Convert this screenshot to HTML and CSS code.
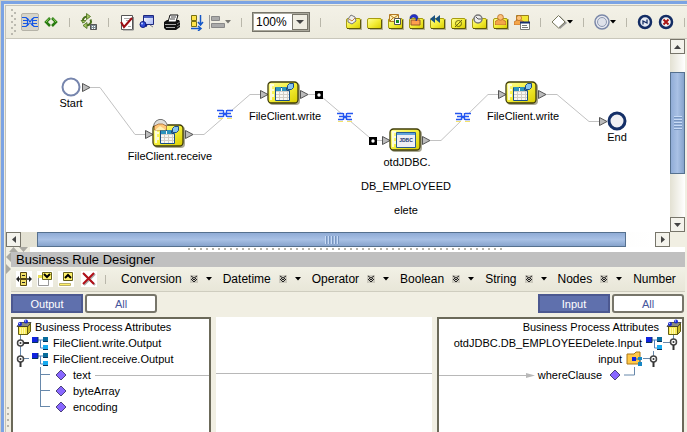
FILE: index.html
```
<!DOCTYPE html>
<html lang="en">
<head>
<meta charset="utf-8">
<title>Business Rule Designer</title>
<link rel="stylesheet" href="styles.css">
</head>
<body>
<svg class="defs" aria-hidden="true">
  <defs>
    <linearGradient id="gold" x1="0" y1="0" x2="1" y2="1"><stop offset="0" stop-color="#ffff9c"/><stop offset=".5" stop-color="#f4ee38"/><stop offset="1" stop-color="#d8cc00"/></linearGradient>
    <linearGradient id="panel" x1="0" y1="0" x2="1" y2="1"><stop offset="0" stop-color="#fff"/><stop offset="1" stop-color="#a4b4f4"/></linearGradient>
    <symbol id="link" viewBox="0 0 16 10"><path d="M0 .5h4l2 2M16 .5h-4l-2 2M1 3.500h4M1 6.500h4M0 9.500h4l2-2M16 9.500h-4l-2-2M11 3.500h4M11 6.500h4M5.500 1v8M10.500 1v8M6 2l4 6M10 2L6 8" fill="none" stroke="#1457e8" stroke-width="1.200"/></symbol>
    <symbol id="rule" viewBox="0 0 16 10"><path d="M1 1h14v8H1z" fill="#fff" opacity=".8"/><path d="M1 9.500h5M10 9.500h5" stroke="#f5e36a"/><path d="M0 1.500h6M10 1.500h6M2 4.500h4M10 4.500h4M1 7.500h5M10 7.500h5M6.500 1v7M9.500 1v7M6 3l4 4M10 3L6 7" fill="none" stroke="#2456f0" stroke-width="1.300"/></symbol>
    <symbol id="box" viewBox="0 0 16 16"><path d="M2 5h14v11H3z" fill="#9b9878" opacity=".7"/><rect x=".5" y="4.500" width="14" height="10" rx="1.500" fill="url(#gold)" stroke="#a79c10"/><path d="M1 14.500h13.500V6" fill="none" stroke="#5f5908"/></symbol>
    <symbol id="man" viewBox="0 0 10 10"><path d="M0 10V7l3-2h4l3 2v3z" fill="#f4a54a" stroke="#b5661c" stroke-width=".7"/><circle cx="5" cy="3" r="2.600" fill="#fcc27a" stroke="#b5661c" stroke-width=".7"/></symbol>
    <symbol id="activity" viewBox="0 0 33 24"><rect x="2" y="2" width="31" height="22" rx="4" fill="#aaa894"/><rect x="1" y="1" width="30" height="21" rx="3.500" fill="url(#gold)" stroke="#3f3c08" stroke-width="1.300"/><path d="M3 3h4v2H5v3h2v2H5v3h2v3H5v3H3z" fill="#fff" opacity=".75"/></symbol>
    <symbol id="client" viewBox="0 0 33 24"><use href="#activity"/><path d="M8.500 6.500h11v3h3v10h-14z" fill="#f8f8f4" stroke="#174d86"/><path d="M9 6h5v4H9zM15 6h4v4h-4z" fill="#2c93bd"/><path d="M9 10.500h13M9 13.500h13M9 16.500h13M12.500 11v8M16.500 11v8M20.500 11v8" stroke="#d2cec5"/><path d="M20.500 4.500l2-2h4v4l-2 2h-4z" fill="#85c4ee" stroke="#1d4a86"/></symbol>
    <symbol id="port" viewBox="0 0 9 9"><path d="M.5.500v8L8 4.500z" fill="#bcbcbc" stroke="#555"/></symbol>
    <symbol id="stop" viewBox="0 0 8 8"><path d="M0 0h8v8H0z"/><circle cx="4" cy="4" r="1.700" fill="#fff"/></symbol>
    <symbol id="down" viewBox="0 0 6 4"><path d="M0 0h6L3 3.500z"/></symbol>
    <symbol id="more" viewBox="0 0 8 8"><path d="M0 0h8v8H0z" fill="#bbb9ae" opacity=".65"/><path d="M1 1l3 2 3-2M1 4l3 3 3-3M2 3l2 2 2-2" fill="none" stroke="#222"/></symbol>
    <symbol id="up-tri" viewBox="0 0 7 4"><path d="M0 4h7L3.500 0z" fill="#444"/></symbol>
    <symbol id="schema" viewBox="0 0 17 15"><path d="M6 4h5M8.500 4v8H11" fill="none" stroke="#5282ba"/><path d="M0 1h6v6H0z" fill="#1023df"/><path d="M11 1h5v5h-5z" fill="#086c9c"/><path d="M11 9h5v5h-5z" fill="#18abf0"/><path d="M0 6.500h6V1M11 5.500h5M11 13.500h5" fill="none" stroke="#06335d"/></symbol>
    <symbol id="attrs" viewBox="0 0 16 16"><path d="M2.500 7.500h9v8h-9z" fill="#f8ea58" stroke="#655e10"/><path d="M11.500 7.500l3-3v8l-3 3z" fill="#c9bb28" stroke="#655e10"/><path d="M1 7.500l3-4h11l-3 4z" fill="#8a8a7e" stroke="#33332b" stroke-width=".8"/><path d="M4.500 9v6M6.500 9v6M8.500 9v6" stroke="#fff9a9"/><circle cx="4" cy="5" r="2" fill="#1728d8"/><circle cx="10" cy="2.500" r="2" fill="#1728d8"/><circle cx="3.500" cy="4.500" r=".7" fill="#b9cbff"/><circle cx="9.500" cy="2" r=".7" fill="#b9cbff"/></symbol>
    <symbol id="leaf" viewBox="0 0 12 12"><path d="M6 1l5 5-5 5-5-5z" fill="#8867ff" stroke="#4c4379"/></symbol>
    <symbol id="frame" viewBox="0 0 16 16"><path d="M0 0h16v16H0z" fill="#fff"/></symbol>
  </defs>
</svg>

<div class="frame">
  <header class="toolbar" role="toolbar" aria-label="Process tools">
    <svg class="grip" width="5" height="26"><path d="M1 0v26M4 3v23" stroke="#aaa9a0" stroke-width="1.500" stroke-dasharray="2 4"/></svg>
    <div class="group">
      <button class="tool tool-on" aria-label="Mapping mode"><svg width="16" height="10"><use href="#link"/></svg></button>
      <button class="tool" aria-label="Show code"><svg width="16" height="16" viewBox="0 0 16 16"><path d="M7 4L3 8l4 4M9 4l4 4-4 4" fill="none" stroke="#287b10" stroke-width="2.500"/><path d="M6 4.500L3 8M10 4.500L13 8" stroke="#91d45e"/></svg></button>
    </div>
    <span class="sep"></span>
    <div class="group">
      <button class="tool" aria-label="Synchronize"><svg width="18" height="18" viewBox="0 0 18 18"><path d="M7 3.500C3 4 2 7 3.500 10M6 12.500c4 0 6-3 4.500-6" fill="none" stroke="#466d1a" stroke-width="2"/><path d="M6.500.500l4 3-4 3zM7 9.500l-4 3 4 3zM1 7.500h5L3.500 10z" fill="#a7c765" stroke="#466d1a" stroke-width=".8"/><path d="M10.500 11.500h6v5h-6z" fill="#7f8e95" stroke="#555"/><path d="M12 13.500h4M12 15.500h4" stroke="#fff" stroke-dasharray="1 1"/></svg></button>
    </div>
    <span class="sep"></span>
    <div class="group group-wide">
      <button class="tool" aria-label="Validate"><svg width="16" height="17" viewBox="0 0 16 17"><path d="M2.500 1.500h11v14h-11z" fill="#fff" stroke="#555"/><path d="M14.500 3v13H4" fill="none" stroke="#8a8a8a"/><path d="M5 4.500h7M7 6.500h5M9 12.500h3" stroke="#aaa"/><path d="M2 8l3 5 8-9" fill="none" stroke="#9c0c12" stroke-width="2"/></svg></button>
      <button class="tool" aria-label="Data view"><svg width="16" height="16" viewBox="0 0 16 16"><path d="M4.500 1.500h10v9h-10z" fill="url(#panel)" stroke="#1d277e"/><path d="M5 3h9" stroke="#465cc0" stroke-width="2"/><path d="M11 11l3 2" stroke="#7d7d88"/><circle cx="4" cy="10.500" r="3" fill="#304bd8" stroke="#101b84"/><path d="M6 11l2 1" stroke="#101b84" stroke-width="2"/><circle cx="3" cy="9.500" r="1" fill="#b9cbff"/></svg></button>
      <button class="tool tool-print" aria-label="Print"><svg width="18" height="17" viewBox="0 0 18 17"><path d="M1 8l3-2h12l1 2v5l-4 3H3l-2-2z" fill="#111"/><path d="M5 8l2-7h8l-2 7z" fill="#fff" stroke="#111"/><path d="M8 3h5M7 5h5" stroke="#444"/><path d="M2 10.500h11M3 13.500h9" stroke="#aaa"/><path d="M14 10l3-2M14 13l3-2" stroke="#777"/></svg></button>
      <button class="tool" aria-label="Auto layout"><svg width="16" height="17" viewBox="0 0 16 17"><path d="M2.500 1.500h5v5h-5zM2.500 7.500h5v5h-5z" fill="#ffe44a" stroke="#777012"/><path d="M11.500 1v9M9 8l2.500 3L14 8M2 14.500h9M9 12l3 2.500L9 17" fill="none" stroke="#1457c8" stroke-width="1.500"/></svg></button>
      <button class="tool tool-menu" aria-label="Align"><svg width="16" height="16" viewBox="0 0 16 16"><path d="M.5 1v14" stroke="#999"/><path d="M2.500 2.500h8v4h-8zM2.500 9.500h13v4h-13z" fill="#aaa" stroke="#888"/></svg><svg width="6" height="4" class="dim"><use href="#down"/></svg></button>
    </div>
    <span class="sep"></span>
    <label class="combo"><select aria-label="Zoom"><option>100%</option></select><span class="combo-arrow"><svg width="8" height="4" viewBox="0 0 8 4"><path d="M0 0h8L4 4z" fill="#444"/></svg></span></label>
    <span class="sep"></span>
    <div class="group group-shapes group-activities">
      <button class="tool" aria-label="Receive"><svg width="16" height="16"><use href="#box"/><path d="M2 5l3-4 4 2 1 4-4 3-4-2z" fill="#eee" stroke="#777"/><path d="M3 5l3 2 3-3" fill="none" stroke="#c8803a"/></svg></button>
      <button class="tool" aria-label="Invoke"><svg width="16" height="16"><use href="#box"/></svg></button>
      <button class="tool" aria-label="Reply"><svg width="16" height="16"><use href="#box"/><path d="M1.500.500h9v7h-9z" fill="#fff0b2" stroke="#b37822"/><path d="M2 1l4 3 4-3M2 7l3-3" fill="none" stroke="#b37822"/><path d="M6.500 4.500h6v6h-6z" fill="#fff" stroke="#555"/><path d="M8 6h3v3H8z" fill="#168921"/></svg></button>
      <button class="tool" aria-label="Send message"><svg width="16" height="16"><use href="#box"/><path d="M2 6h9v5H2z" fill="#ff9f4e" stroke="#98582b"/><path d="M1 5a4 4 0 0 1 8-1l-2 3V4L4 3z" fill="#2330c8" stroke="#111d78" stroke-width=".5"/></svg></button>
      <button class="tool" aria-label="Compensate"><svg width="16" height="16"><use href="#box"/><path d="M5 1v8L0 5zM10 1v8L5 5z" fill="#195180"/></svg></button>
      <button class="tool" aria-label="Empty"><svg width="16" height="16"><use href="#box"/><circle cx="7.500" cy="9.500" r="3" fill="none" stroke="#6e680d"/><path d="M4 13l7-7" stroke="#6e680d"/></svg></button>
      <button class="tool" aria-label="Wait"><svg width="16" height="16"><use href="#box"/><circle cx="6" cy="5" r="4" fill="#eee" stroke="#777" stroke-width="1.500"/><path d="M4 3l2 2h3" fill="none" stroke="#555"/></svg></button>
      <button class="tool" aria-label="User activity"><svg width="16" height="16"><use href="#box"/><use href="#man" x="2" y="0" width="11" height="11"/></svg></button>
      <button class="tool" aria-label="Worklist"><svg width="16" height="16"><path d="M2.500 1.500h12v9h-12z" fill="#f2e633" stroke="#987f1e"/><use href="#man" x="0" y="1" width="10" height="10"/><path d="M6.500 8.500h9v7h-9z" fill="#fff" stroke="#777"/><path d="M6 8.500h10" stroke="#172f70" stroke-width="2"/><path d="M8 11.500h5M8 13.500h6" stroke="#777"/></svg></button>
    </div>
    <span class="sep"></span>
    <button class="tool tool-menu" aria-label="Gateway"><svg width="16" height="16"><path d="M9 2l7 7-7 6-6-6z" fill="#999"/><path d="M7.500 1.500L14 8l-6.500 6L1 8z" fill="#fff" stroke="#77775c"/></svg><svg width="6" height="4"><use href="#down"/></svg></button>
    <span class="sep"></span>
    <button class="tool tool-menu" aria-label="Intermediate event"><svg width="16" height="16"><circle cx="8" cy="8" r="7" fill="#e8eaf0" stroke="#7b88a8" stroke-width="1.500"/><circle cx="8" cy="8" r="4.500" fill="#dfe2ea" stroke="#8e99b2"/></svg><svg width="6" height="4"><use href="#down"/></svg></button>
    <span class="sep"></span>
    <div class="group group-shapes">
      <button class="tool" aria-label="End event"><svg width="16" height="16"><circle cx="8" cy="8" r="6" fill="#e6eaf2" stroke="#132c64" stroke-width="2.500"/><path d="M6 10.500V7l4 2V5.500" fill="none" stroke="#132c64" stroke-width="1.300"/></svg></button>
      <button class="tool" aria-label="Terminate"><svg width="16" height="16"><circle cx="8" cy="8" r="6" fill="#f4f4f4" stroke="#132c64" stroke-width="2.500"/><path d="M5.500 5.500l5 5M10.500 5.500l-5 5" stroke="#a81414" stroke-width="2"/></svg></button>
    </div>
    <span class="sep"></span>
  </header>

  <main>
    <section class="editor" aria-label="Process canvas">
      <svg class="canvas">
        <g transform="translate(-6 -39)">
          <g class="edges">
            <path d="M89 87.500h11l35 47h11"/><path d="M193 134.500h11l46-40h10"/><path d="M308 94.500h11L373 140.500h10"/><path d="M430 140.500h11l47-46h10"/><path d="M546 94.500h11l32 27h10"/>
          </g>
          <circle cx="71" cy="87" r="8.500" fill="#fff" stroke="#7685ad" stroke-width="2"/>
          <use href="#port" x="82" y="83" width="9" height="9"/>
          <use href="#port" x="145" y="130" width="9" height="9"/>
          <use href="#client" x="152" y="124" width="33" height="24"/>
          <path d="M154 126v-2l2-3 3-1.500h3l3 1.500 2 3v2z" fill="#dededa" stroke="#777"/><path d="M154.500 130v-4l4-2h4l4 2v4z" fill="#ffc777" stroke="#9b5a24" stroke-width=".7"/><path d="M155 130l5-4 6 4" fill="#fff0b2"/>
          <use href="#port" x="185" y="130" width="9" height="9"/>
          <use href="#rule" x="217" y="109" width="16" height="10"/>
          <use href="#port" x="260" y="90" width="9" height="9"/>
          <use href="#client" x="267" y="81" width="33" height="24"/>
          <use href="#port" x="300" y="90" width="9" height="9"/>
          <use href="#stop" x="315" y="91" width="8" height="8"/>
          <use href="#rule" x="337" y="112" width="16" height="10"/>
          <use href="#stop" x="369" y="137" width="8" height="8"/>
          <use href="#port" x="382" y="136" width="9" height="9"/>
          <use href="#activity" x="389" y="128" width="33" height="24"/>
          <path d="M396.500 132.500h19v15h-19z" fill="#eeeef5" stroke="#295b8f"/><path d="M397 134h18" stroke="#62a3dc" stroke-width="2"/><text class="badge" x="406" y="142">JDBC</text>
          <use href="#port" x="422" y="136" width="9" height="9"/>
          <use href="#rule" x="455" y="112" width="16" height="10"/>
          <use href="#port" x="498" y="90" width="9" height="9"/>
          <use href="#client" x="505" y="81" width="33" height="24"/>
          <use href="#port" x="538" y="90" width="9" height="9"/>
          <use href="#port" x="599" y="117" width="9" height="9"/>
          <circle cx="617" cy="121" r="8" fill="#f0f0f3" stroke="#142f67" stroke-width="3"/>
          <g class="labels">
            <text x="71" y="107">Start</text><text x="170" y="160">FileClient.receive</text><text x="285" y="120">FileClient.write</text>
            <text x="407" y="166">otdJDBC.</text><text x="406" y="190">DB_EMPLOYEED</text><text x="406" y="214">elete</text>
            <text x="523" y="120">FileClient.write</text><text x="617" y="141">End</text>
          </g>
        </g>
      </svg>
      <div class="scroll scroll-v">
        <button class="arrow" aria-label="Scroll up"><svg width="7" height="4"><use href="#up-tri"/></svg></button>
        <div class="track"><div class="thumb"><i></i></div></div>
        <button class="arrow" aria-label="Scroll down"><svg width="7" height="4" class="flip"><use href="#up-tri"/></svg></button>
      </div>
      <div class="scroll scroll-h">
        <button class="arrow" aria-label="Scroll left"><svg width="4" height="7"><path d="M4 0v7L0 3.500z" fill="#444"/></svg></button>
        <div class="track"><div class="thumb"><i></i></div></div>
        <button class="arrow" aria-label="Scroll right"><svg width="4" height="7"><path d="M0 0v7l4-3.500z" fill="#444"/></svg></button>
      </div>
    </section>

    <div class="divider">
      <svg width="24" height="5"><path d="M3 5h9L7.500 0zM13 0h9l-4.500 5z" fill="#aaa9a2"/></svg>
      <span class="dots"></span>
    </div>

    <section class="lower">
      <div class="side"><svg width="5" height="22"><path d="M5 0v10L0 5zM0 12v10l5-5z" fill="#aaa9a2"/></svg><span class="dots-v"></span></div>
      <div class="designer">
        <h1>Business Rule Designer</h1>
        <div class="rulebar" role="toolbar" aria-label="Rule tools">
          <div class="rule-icons">
            <button class="tool" aria-label="Expand all"><svg width="16" height="16"><use href="#frame"/><path d="M1 8h14" stroke="#222" stroke-width="1.500"/><path d="M3 5v6L0 8zM13 5v6l3-3z" fill="#222"/><path d="M4.500 1.500h6v6h-6zM4.500 8.500h6v6h-6z" fill="#f2df68" stroke="#574711"/><path d="M6 4.500h3M6 11.500h3" stroke="#222"/></svg></button>
            <button class="tool" aria-label="Collapse"><svg width="16" height="16"><use href="#frame"/><path d="M1.500 4.500h10v10h-10z" fill="#fff" stroke="#999"/><path d="M1 4h4v3H1z" fill="#e9de55"/><path d="M5.500 1.500h9v7h-9z" fill="#fff16a" stroke="#67621e"/><path d="M7 3l3 3 3-3" fill="none" stroke="#000" stroke-width="2"/></svg></button>
            <button class="tool" aria-label="Expand"><svg width="16" height="16"><use href="#frame"/><path d="M1.500 12.500h11v2h-11z" fill="#ffef68" stroke="#bbb16a"/><path d="M5.500 1.500h9v8h-9z" fill="#fff16a" stroke="#67621e"/><path d="M7 7l3-3 3 3" fill="none" stroke="#000" stroke-width="2"/></svg></button>
            <button class="tool tool-delete" aria-label="Delete"><svg width="16" height="16"><use href="#frame"/><path d="M3 3l11 11M14 3L3 14" stroke="#aaa" stroke-width="2"/><path d="M2 2l11 11M13 2L2 13" stroke="#b20f18" stroke-width="2"/></svg></button>
          </div>
          <span class="sep"></span>
          <div class="menus">
            <button>Conversion<svg width="8" height="8"><use href="#more"/></svg><svg width="6" height="4"><use href="#down"/></svg></button>
            <button>Datetime<svg width="8" height="8"><use href="#more"/></svg><svg width="6" height="4"><use href="#down"/></svg></button>
            <button>Operator<svg width="8" height="8"><use href="#more"/></svg><svg width="6" height="4"><use href="#down"/></svg></button>
            <button>Boolean<svg width="8" height="8"><use href="#more"/></svg><svg width="6" height="4"><use href="#down"/></svg></button>
            <button>String<svg width="8" height="8"><use href="#more"/></svg><svg width="6" height="4"><use href="#down"/></svg></button>
            <button>Nodes<svg width="8" height="8"><use href="#more"/></svg><svg width="6" height="4"><use href="#down"/></svg></button>
            <button>Number</button>
          </div>
        </div>
        <div class="tabs">
          <div class="pair"><button class="tab tab-on">Output</button><button class="tab">All</button></div>
          <div class="pair"><button class="tab tab-on">Input</button><button class="tab">All</button></div>
        </div>
        <div class="mapper">
          <ul class="tree">
            <li class="root"><svg width="16" height="16"><use href="#attrs"/></svg>Business Process Attributes</li>
            <li class="branch"><svg width="16" height="16"><path d="M4.500 0v16" stroke="#6788ab"/><circle cx="4.500" cy="8" r="3" fill="#fff" stroke="#444" stroke-width="1.500"/><circle cx="4.500" cy="8" r="1" fill="#333"/><path d="M8 8h5" stroke="#333" stroke-width="2"/></svg><svg width="17" height="15"><use href="#schema"/></svg><span>FileClient.write.Output</span></li>
            <li class="branch"><svg width="16" height="16"><path d="M4.500 0v6M8 7.500h5" stroke="#6788ab"/><circle cx="4.500" cy="8" r="3" fill="#fff" stroke="#444" stroke-width="1.500"/><circle cx="4.500" cy="8" r="1" fill="#333"/><path d="M4.500 11v5" stroke="#333" stroke-width="2"/></svg><svg width="17" height="15"><use href="#schema"/></svg><span>FileClient.receive.Output</span></li>
            <li class="leaf"><svg width="12" height="16"><path d="M1.500 0v16M2 7.500h9" stroke="#6788ab"/></svg><svg width="12" height="12"><use href="#leaf"/></svg><span>text</span><i class="wire"></i></li>
            <li class="leaf"><svg width="12" height="16"><path d="M1.500 0v16M2 7.500h9" stroke="#6788ab"/></svg><svg width="12" height="12"><use href="#leaf"/></svg><span>byteArray</span></li>
            <li class="leaf"><svg width="12" height="16"><path d="M1.500 0v8M1 7.500h10" stroke="#6788ab"/></svg><svg width="12" height="12"><use href="#leaf"/></svg><span>encoding</span></li>
          </ul>
          <div class="links"><i class="wire"></i></div>
          <ul class="tree tree-right">
            <li class="root"><svg width="16" height="16"><use href="#attrs"/></svg>Business Process Attributes</li>
            <li class="branch"><svg width="16" height="16"><path d="M10.500 0v5M0 7.500h7" stroke="#6788ab"/><circle cx="10.500" cy="7" r="3" fill="#fff" stroke="#444" stroke-width="1.500"/><circle cx="10.500" cy="7" r="1" fill="#333"/><path d="M10.500 10v5" stroke="#333" stroke-width="2"/></svg><svg width="17" height="15"><use href="#schema"/></svg><span>otdJDBC.DB_EMPLOYEEDelete.Input</span></li>
            <li class="branch branch-in"><svg width="16" height="16"><path d="M10.500 0v5M0 7.500h7" stroke="#6788ab"/><circle cx="10.500" cy="8" r="3" fill="#fff" stroke="#444" stroke-width="1.500"/><circle cx="10.500" cy="8" r="1" fill="#333"/><path d="M10.500 11v5" stroke="#333" stroke-width="2"/></svg><svg width="17" height="16"><path d="M1 3h7l2-2h4v12H1z" fill="#ffc848" stroke="#a97718"/><path d="M6 6h4v4H6z" fill="#1023df"/><path d="M10 8h4v5" fill="none" stroke="#31679a"/><path d="M12 6h4v3h-4zM12 11h4v4h-4z" fill="#1686c4"/></svg><span>input</span></li>
            <li class="leaf"><svg width="12" height="16"><path d="M10.500 0v8H0" fill="none" stroke="#6788ab"/></svg><svg width="12" height="12"><use href="#leaf"/></svg><span>whereClause</span><svg width="9" height="5"><path d="M0 0v5l9-2.500z" fill="#b8b8b8"/></svg><i class="wire"></i></li>
          </ul>
        </div>
      </div>
    </section>
  </main>
</div>
</body>
</html>
```
FILE: styles.css
```
* { box-sizing: border-box; }

body {
  margin: 0;
  height: 100vh;
  overflow: hidden;
  background: #f1efe3;
  color: #000;
  font: 11px "Liberation Sans", Arial, sans-serif;
  border-top: 1px solid #d4d2c4;
  border-left: 1px solid #d4d2c4;
}

button { padding: 0; border: 0; background: none; font: inherit; color: inherit; }
svg { display: block; flex: none; }
ul { margin: 0; padding: 0; list-style: none; }
.defs { position: absolute; width: 0; height: 0; }

.frame {
  height: 100%;
  display: flex;
  flex-direction: column;
  border-top: 3px solid #7ba3e4;
  border-left: 3px solid #7ba3e4;
  padding: 1px 0 0 1px;
}

/* Process toolbar */
.toolbar {
  display: flex;
  align-items: center;
  height: 34px;
  flex: none;
  padding-left: 5px;
  border-top: 1px solid #c5c3b8;
  border-left: 1px solid #c5c3b8;
  border-bottom: 1px solid #c9c7bb;
  background: linear-gradient(#f3f1e7, #eceadd);
  overflow: hidden;
}
.grip { margin-right: 5px; }
.group { display: flex; align-items: center; gap: 4px; }
.group-wide, .group-shapes { gap: 5px; }
.group-wide { gap: 4px; }
.group-activities { margin-left: 15px; }
.tool { display: flex; align-items: center; justify-content: center; min-width: 16px; height: 18px; flex: none; }
.tool-on { width: 18px; background: #d6d4c9; border: 1px solid #b5b3a8; border-radius: 2px; }
.tool-menu { gap: 0; }
.tool-print { margin: 0 4px; }
.dim { opacity: .5; }
.sep { flex: none; width: 1px; height: 9px; margin: 0 10px; background: #b9b7aa; }

.combo { position: relative; flex: none; width: 58px; height: 20px; border: 1px solid #77756a; outline: 1px solid #aaa89c; outline-offset: -2px; background: #fff; }
.combo select { appearance: none; width: 100%; height: 100%; border: 0; padding: 0 0 0 3px; background: none; font: 12px "Liberation Sans", Arial, sans-serif; color: #000; }
.combo-arrow { position: absolute; right: 1px; top: 1px; bottom: 1px; width: 16px; display: flex; align-items: center; justify-content: center; border: 1px solid #77756a; background: #efede2; pointer-events: none; }

/* Canvas */
main { flex: 1; min-height: 0; display: flex; flex-direction: column; margin-right: 2px; border-left: 1px solid #c5c3b8; }
.editor { display: grid; grid-template: 193px 15px / 1fr 15px; flex: none; }
.canvas { width: 100%; height: 100%; background: #fff; }
.edges { fill: none; stroke: #c2c2c2; }
.labels { font-size: 11px; text-anchor: middle; }
.badge { font-size: 5px; font-weight: bold; text-anchor: middle; fill: #20346e; }

.scroll { display: flex; background: #f1f0e8; }
.scroll-v { flex-direction: column; }
.arrow { width: 15px; height: 15px; flex: none; display: grid; place-items: center; border: 1px solid #77756a; background: #f4f3ec; }
.flip { transform: rotate(180deg); }
.track { flex: 1; display: flex; }
.thumb { display: grid; place-items: center; border: 1px solid #56718f; }
.scroll-v .track { flex-direction: column; padding: 18px 0 43px; background: linear-gradient(90deg, #e3e1d3, #fff); }
.scroll-h .track { padding: 0 29px 0 16px; background: linear-gradient(90deg, #e3e1d3, #fff); }
.scroll-v .thumb { flex: 1; background: linear-gradient(90deg, #90acd6, #a9c1e5, #86a3cc); }
.scroll-h .thumb { flex: 1; background: linear-gradient(#90acd6, #a9c1e5, #86a3cc); }
.scroll-v i { width: 8px; height: 14px; background: repeating-linear-gradient(#c8dbf5 0 1px, #7896c0 1px 2px, #97b2db 2px 3px); }
.scroll-h i { width: 14px; height: 8px; background: repeating-linear-gradient(90deg, #c8dbf5 0 1px, #7896c0 1px 2px, #97b2db 2px 3px); }

.divider { flex: none; display: flex; height: 5px; background: #fff; }
.divider svg { background: #f1efe3; }
.dots { width: 315px; height: 2px; margin: 1px 0 0 158px; background: repeating-linear-gradient(90deg, #b6b4aa 0 2px, #fff 2px 6px); }

/* Rule designer */
.lower { flex: 1; min-height: 0; display: flex; }
.side { width: 5px; flex: none; display: flex; flex-direction: column; justify-content: space-between; }
.dots-v { width: 2px; height: 24px; margin: 0 0 1px 1px; background: repeating-linear-gradient(#b6b4aa 0 2px, #f1efe3 2px 6px); }
.designer { flex: 1; min-width: 0; display: flex; flex-direction: column; }
h1 { margin: 0; padding-left: 5px; background: #c0c0c0; font-size: 13px; font-weight: normal; line-height: 15px; }

.rulebar { display: flex; align-items: center; height: 25px; flex: none; padding-left: 5px; border-bottom: 1px solid #cfcdbf; background: linear-gradient(#f2f1e6, #e8e6d8); overflow: hidden; }
.rule-icons { display: flex; gap: 5px; }
.tool-delete { margin-left: 2px; }
.rulebar > .sep { margin: 0 15px 0 8px; }
.menus { display: flex; gap: 11px; font-size: 12px; }
.menus button { display: flex; align-items: center; gap: 8px; flex: none; }

.tabs { display: flex; justify-content: space-between; flex: none; padding: 2px 1px 4px 0; }
.pair { display: flex; gap: 2px; }
.tab { width: 72px; height: 19px; border: 2px solid #77756a; border-radius: 3px; background: #fff; color: #46569c; }
.tab-on { background: #5f70ad; border-color: #4c5890; border-radius: 0; color: #fff; }

.mapper { flex: 1; min-height: 0; display: grid; grid-template-columns: 200fr 216fr 247fr; gap: 5px; padding-right: 1px; }
.tree { background: #fff; border: 2px solid #6b6959; border-bottom: 0; }
.tree li { display: flex; align-items: center; height: 16px; white-space: nowrap; }
.root { gap: 3px; padding-left: 3px; }
.branch { padding-left: 3px; }
.branch span { margin-left: 4px; }
.leaf { padding-left: 26px; gap: 4px; }
.leaf span { margin-left: 2px; }
.wire { flex: 1; height: 1px; background: #b8b8b8; }
.links { display: flex; background: #fff; padding-top: 56px; }

.tree-right li { flex-direction: row-reverse; padding-left: 0; }
.tree-right .root { gap: 7px; }
.tree-right .branch { padding-right: 3px; }
.tree-right .branch-in { padding-right: 23px; }
.tree-right .branch span { margin: 0 4px 0 0; }
.tree-right .leaf { padding-right: 46px; gap: 3px; }
.tree-right .leaf span { margin: 0 4px 0 0; }
.tree-right .leaf .wire { margin-right: -3px; }
```
